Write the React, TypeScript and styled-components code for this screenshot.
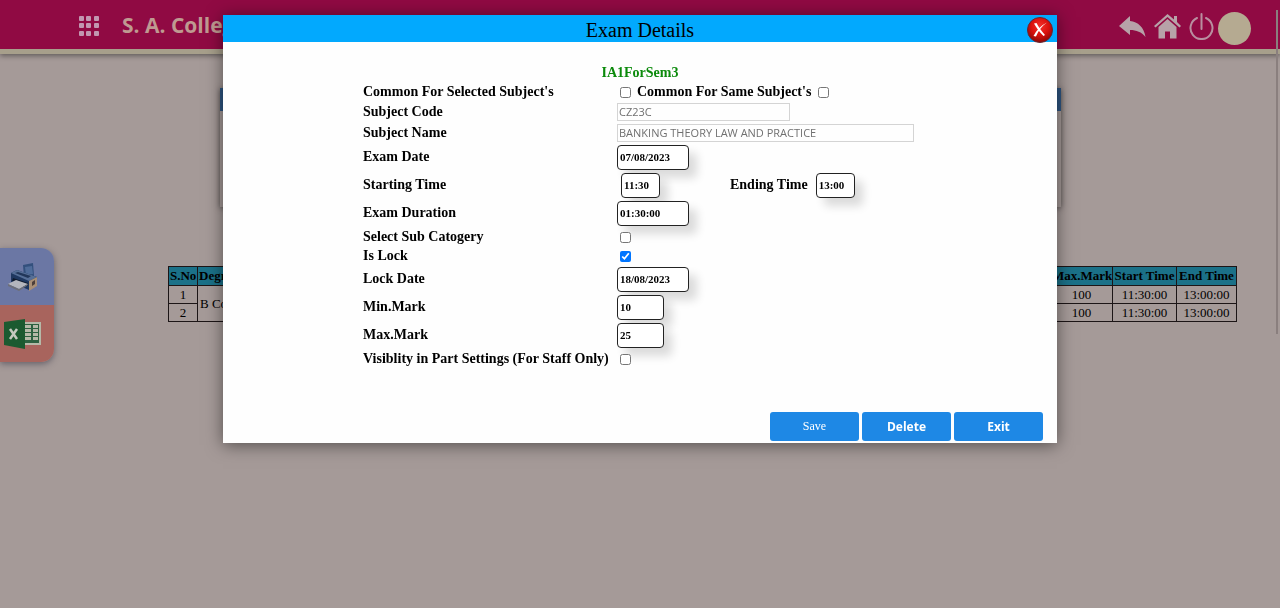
import React from "react";
import styled, { createGlobalStyle } from "styled-components";

const serif = '"Liberation Serif", "Times New Roman", serif';
const sans = '"Open Sans", "Noto Sans", sans-serif';

const GlobalStyle = createGlobalStyle`
  * { box-sizing: border-box; }
  body { margin: 0; min-height: 100vh; background: #a59a98; font-family: ${serif}; color: #000; }
`;

const Header = styled.header`
  display: flex;
  align-items: center;
  height: 54px;
  padding: 0 29px 0 79px;
  background: #900a43;
  border-bottom: 5px solid #a79f8b;
  box-shadow: 0 2px 5px rgba(0, 0, 0, 0.4);
`;

const Brand = styled.h1`
  flex: 1;
  margin: 0 0 0 23px;
  font: bold 21px/28px ${sans};
  color: #bf9a91;
  white-space: nowrap;
`;

const IconButton = styled.button`
  display: flex;
  padding: 0;
  border: 0;
  background: none;
  cursor: pointer;
`;

const UserArea = styled.div`
  display: flex;
  align-items: center;
  gap: 4px;
  padding-top: 8px;
`;

const HeaderActions = styled.nav`
  display: flex;
  align-items: center;
  gap: 8px;
  padding-bottom: 4px;
`;

const Avatar = styled.span`
  width: 33px;
  height: 33px;
  border-radius: 50%;
  background: #b5aa91;
`;

const FilterCard = styled.section`
  width: 841px;
  max-width: 90%;
  height: 119px;
  margin: 34px auto 0;
  border-top: 23px solid #2f5683;
  box-shadow: 0 1px 6px rgba(0, 0, 0, 0.5);
`;

const TableArea = styled.main`
  padding: 59px 43px 0 168px;
`;

const ExamTable = styled.table`
  width: 100%;
  table-layout: fixed;
  border-collapse: collapse;
  border: 1px solid #0d0607;
  font-size: 13px;
  line-height: 17px;

  th, td {
    padding: 0 1px;
    border: 1px solid #1c1516;
    text-align: center;
    white-space: nowrap;
    overflow: hidden;
  }
  th { background: #1b7188; line-height: 18px; }
`;

const Col = styled.col<{ $w?: number }>`
  width: ${(p) => (p.$w ? `${p.$w}px` : "auto")};
`;

const LeftTh = styled.th`
  && { text-align: left; }
`;

const LeftTd = styled.td`
  && { padding-left: 2px; text-align: left; }
`;

const SideTools = styled.aside`
  position: fixed;
  top: 248px;
  left: 0;
  width: 54px;
  border-radius: 0 13px 13px 0;
  overflow: hidden;
  box-shadow: 0 2px 6px rgba(40, 40, 60, 0.5);
`;

const SideButton = styled.button<{ $bg: string }>`
  display: flex;
  align-items: center;
  width: 100%;
  height: 57px;
  padding: 0 0 0 4px;
  border: 0;
  background: ${(p) => p.$bg};
`;

const ScrollMark = styled.div`
  position: fixed;
  top: 10px;
  right: 2px;
  width: 2px;
  height: 324px;
  background: #8a7f7e;
`;

const Overlay = styled.div`
  position: fixed;
  inset: 0;
  display: flex;
  justify-content: center;
  align-items: flex-start;
  padding-top: 15px;
`;

const Dialog = styled.div`
  width: 834px;
  max-width: 95%;
  background: #fefefe;
  box-shadow: 0 2px 16px rgba(0, 0, 0, 0.5);
`;

const TitleBar = styled.div`
  display: grid;
  grid-template-columns: 1fr auto 1fr;
  align-items: center;
  height: 27px;
  padding: 0 4px;
  background: #02a9fe;
`;

const Title = styled.h2`
  grid-column: 2;
  margin: 0;
  padding-top: 2px;
  font-size: 20px;
  font-weight: normal;
  line-height: 27px;
`;

const CloseButton = styled(IconButton)`
  justify-self: end;
`;

const Form = styled.form`
  padding-top: 21px;
`;

const ExamName = styled.h3`
  margin: 0;
  font-size: 14px;
  line-height: 20px;
  text-align: center;
  color: #0b8a0b;
`;

const Row = styled.div<{ $h: number }>`
  display: grid;
  grid-template-columns: 254px 1fr;
  align-items: center;
  height: ${(p) => p.$h}px;
  padding-left: 140px;
  font-size: 14px;
  font-weight: bold;
  white-space: nowrap;
`;

const Cell = styled.div`
  display: flex;
  align-items: center;
`;

const Check = styled.input.attrs({ type: "checkbox" })`
  width: 11px;
  height: 11px;
  margin: 0 3px;
`;

const InlineLabel = styled.label<{ $before?: number }>`
  margin: 0 4px 0 ${(p) => p.$before ?? 3}px;
`;

const PlainInput = styled.input<{ $w: number }>`
  width: ${(p) => p.$w}px;
  height: 18px;
  padding: 0 1px;
  border: 1px solid #d4d4d4;
  background: #fefefe;
  font: 11px ${sans};
  color: #707070;
`;

const BoxInput = styled.input<{ $w: number; $inset?: boolean }>`
  width: ${(p) => p.$w}px;
  height: 25px;
  margin-left: ${(p) => (p.$inset ? 4 : 0)}px;
  padding: 0 2px;
  border: 1px solid #222;
  border-radius: 4px;
  background: #fff;
  box-shadow: 8px 8px 10px rgba(0, 0, 0, 0.14);
  font: bold 11px ${serif};
  color: #000;
`;

const Actions = styled.div`
  display: flex;
  justify-content: flex-end;
  gap: 3px;
  padding: 43px 14px 2px 0;
`;

const ActionButton = styled.button<{ $plain?: boolean }>`
  width: 89px;
  height: 29px;
  padding: 0;
  border: 0;
  border-radius: 3px;
  background: #1e88e5;
  color: #fff;
  font: ${(p) => (p.$plain ? `12px ${serif}` : `bold 12px ${sans}`)};
`;

const GridIcon = () => (
  <svg width="20" height="22" viewBox="0 0 20 22" fill="#c297b0">
    {[2, 9, 17].map((y) =>
      [0, 7, 15].map((x) => <rect key={`${x}-${y}`} x={x} y={y} width="5" height="5" rx="1" />)
    )}
  </svg>
);

const BackIcon = () => (
  <svg width="27" height="22" viewBox="0 0 27 22" fill="#b7a2a8">
    <path d="M0 10 11 0v5c8 1 14 6 15.500 16-4-5-9-7-15.500-7v5z" />
  </svg>
);

const HomeIcon = () => (
  <svg width="27" height="25" viewBox="0 0 27 25" fill="#b7a2a8">
    <path d="M13.500 0 0 12l1.500 1.500L13.500 3 25.500 13.500l1.500-1.500-4-4V2h-3v3.500z" />
    <path d="M13.500 5 4.500 13v11.500h6.500v-7h5v7h6.500V13z" />
  </svg>
);

const PowerIcon = () => (
  <svg width="25" height="27" viewBox="0 0 25 27" fill="none" stroke="#b98fa0" strokeWidth="2" strokeLinecap="round">
    <path d="M8 5a11 11 0 1 0 9 0M12.500 1v15" />
  </svg>
);

const CloseIcon = () => (
  <svg width="26" height="26" viewBox="0 0 26 26">
    <defs>
      <radialGradient id="closeFill" cx="50%" cy="35%" r="70%">
        <stop offset="0" stopColor="#f5302a" />
        <stop offset="0.5" stopColor="#d9110d" />
        <stop offset="1" stopColor="#7d0505" />
      </radialGradient>
    </defs>
    <circle cx="13" cy="13" r="12.500" fill="url(#closeFill)" stroke="#6a2530" />
    <path d="M7 6.500 9.500 6c2 4 5 8 8.500 12l-1.500 1C12.500 15 9.500 11 7 6.500z" fill="#fff" />
    <path d="M20 5.500C15 9 11.500 13.500 9 19.500l-2.500-.5C9.500 13 14 8.500 20 5.500z" fill="#fff" />
  </svg>
);

const PrinterIcon = () => (
  <svg width="36" height="30" viewBox="0 0 36 30">
    <path d="m19 3 10-2 1 13-10 1z" fill="#33507d" />
    <path d="m21 5 7-1 1 8-7 1z" fill="#4f6c9a" />
    <path d="m7 11 6-3 20 7v8l-8 5-18-8z" fill="#1f3860" />
    <path d="m7 11 6-3 20 7-8 4z" fill="#566f97" />
    <path d="m11 11 3-1 13 4-3 2z" fill="#22375a" />
    <path d="m25 19 8-4v9l-8 5z" fill="#a88f76" />
    <path d="m28 20 3-2v4l-3 2z" fill="#4c3f3a" />
    <path d="m9 16 15 5v3L8 19z" fill="#0f1a2d" />
    <path d="m4 22 8-4 12 4-9 5z" fill="#b4b6bd" />
    <path d="m4 22 11 5 9-5v1l-9 6-11-5z" fill="#6d6f78" />
  </svg>
);

const ExcelIcon = () => (
  <svg width="38" height="30" viewBox="0 0 38 30">
    <path d="M18 3h19v23H18z" fill="#b5b9a8" />
    <path d="M19 5h16v19H19z" fill="#2c6140" />
    <path d="M21 6h6v3h-6zM29 6h5v3h-5zM21 10h6v3h-6zM29 10h5v3h-5zM21 14h6v3h-6zM29 14h5v3h-5zM21 18h6v3h-6zM29 18h5v3h-5z" fill="#b5b9a8" />
    <path d="M0 3 21 0v30L0 26z" fill="#1b5a30" />
    <path d="m6 10 7 10M13 10 6 20" stroke="#c4c9c0" strokeWidth="2.500" />
  </svg>
);

const exams = [
  { no: 1, max: 100, start: "11:30:00", end: "13:00:00" },
  { no: 2, max: 100, start: "11:30:00", end: "13:00:00" },
];

export default function App() {
  return (
    <>
      <GlobalStyle />
      <Header>
        <IconButton aria-label="Menu"><GridIcon /></IconButton>
        <Brand>S. A. College</Brand>
        <UserArea>
          <HeaderActions>
            <IconButton aria-label="Back"><BackIcon /></IconButton>
            <IconButton aria-label="Home"><HomeIcon /></IconButton>
            <IconButton aria-label="Log out"><PowerIcon /></IconButton>
          </HeaderActions>
          <Avatar />
        </UserArea>
      </Header>
      <FilterCard />
      <TableArea>
        <ExamTable>
          <colgroup>
            <Col $w={29} /><Col /><Col $w={62} /><Col $w={64} /><Col $w={60} />
          </colgroup>
          <thead>
            <tr><th>S.No</th><LeftTh>Degree</LeftTh><th>Max.Mark</th><th>Start Time</th><th>End Time</th></tr>
          </thead>
          <tbody>
            {exams.map((exam, i) => (
              <tr key={exam.no}>
                <td>{exam.no}</td>
                {i === 0 && <LeftTd rowSpan={2}>B Com</LeftTd>}
                <td>{exam.max}</td>
                <td>{exam.start}</td>
                <td>{exam.end}</td>
              </tr>
            ))}
          </tbody>
        </ExamTable>
      </TableArea>
      <SideTools>
        <SideButton $bg="#6b77a4" aria-label="Print"><PrinterIcon /></SideButton>
        <SideButton $bg="#a8645d" aria-label="Export to Excel"><ExcelIcon /></SideButton>
      </SideTools>
      <ScrollMark />
      <Overlay>
        <Dialog role="dialog" aria-labelledby="dialogTitle">
          <TitleBar>
            <Title id="dialogTitle">Exam Details</Title>
            <CloseButton aria-label="Close"><CloseIcon /></CloseButton>
          </TitleBar>
          <Form onSubmit={(e) => e.preventDefault()}>
            <ExamName>IA1ForSem3</ExamName>
            <Row $h={18}>
              <label htmlFor="selected">Common For Selected Subject's</label>
              <Cell>
                <Check id="selected" />
                <InlineLabel htmlFor="same">Common For Same Subject's</InlineLabel>
                <Check id="same" />
              </Cell>
            </Row>
            <Row $h={21}>
              <label htmlFor="code">Subject Code</label>
              <PlainInput id="code" $w={173} defaultValue="CZ23C" disabled />
            </Row>
            <Row $h={21}>
              <label htmlFor="name">Subject Name</label>
              <PlainInput id="name" $w={297} defaultValue="BANKING THEORY LAW AND PRACTICE" disabled />
            </Row>
            <Row $h={28}>
              <label htmlFor="date">Exam Date</label>
              <BoxInput id="date" $w={72} defaultValue="07/08/2023" />
            </Row>
            <Row $h={28}>
              <label htmlFor="start">Starting Time</label>
              <Cell>
                <BoxInput id="start" $w={39} $inset defaultValue="11:30" />
                <InlineLabel htmlFor="end" $before={70}>Ending Time</InlineLabel>
                <BoxInput id="end" $w={39} $inset defaultValue="13:00" />
              </Cell>
            </Row>
            <Row $h={28}>
              <label htmlFor="duration">Exam Duration</label>
              <BoxInput id="duration" $w={72} defaultValue="01:30:00" />
            </Row>
            <Row $h={20}>
              <label htmlFor="sub">Select Sub Catogery</label>
              <Cell><Check id="sub" /></Cell>
            </Row>
            <Row $h={18}>
              <label htmlFor="lock">Is Lock</label>
              <Cell><Check id="lock" defaultChecked /></Cell>
            </Row>
            <Row $h={28}>
              <label htmlFor="lockDate">Lock Date</label>
              <BoxInput id="lockDate" $w={72} defaultValue="18/08/2023" />
            </Row>
            <Row $h={28}>
              <label htmlFor="min">Min.Mark</label>
              <BoxInput id="min" $w={47} defaultValue="10" />
            </Row>
            <Row $h={28}>
              <label htmlFor="max">Max.Mark</label>
              <BoxInput id="max" $w={47} defaultValue="25" />
            </Row>
            <Row $h={20}>
              <label htmlFor="visible">Visiblity in Part Settings (For Staff Only)</label>
              <Cell><Check id="visible" /></Cell>
            </Row>
            <Actions>
              <ActionButton $plain type="submit">Save</ActionButton>
              <ActionButton type="button">Delete</ActionButton>
              <ActionButton type="button">Exit</ActionButton>
            </Actions>
          </Form>
        </Dialog>
      </Overlay>
    </>
  );
}
